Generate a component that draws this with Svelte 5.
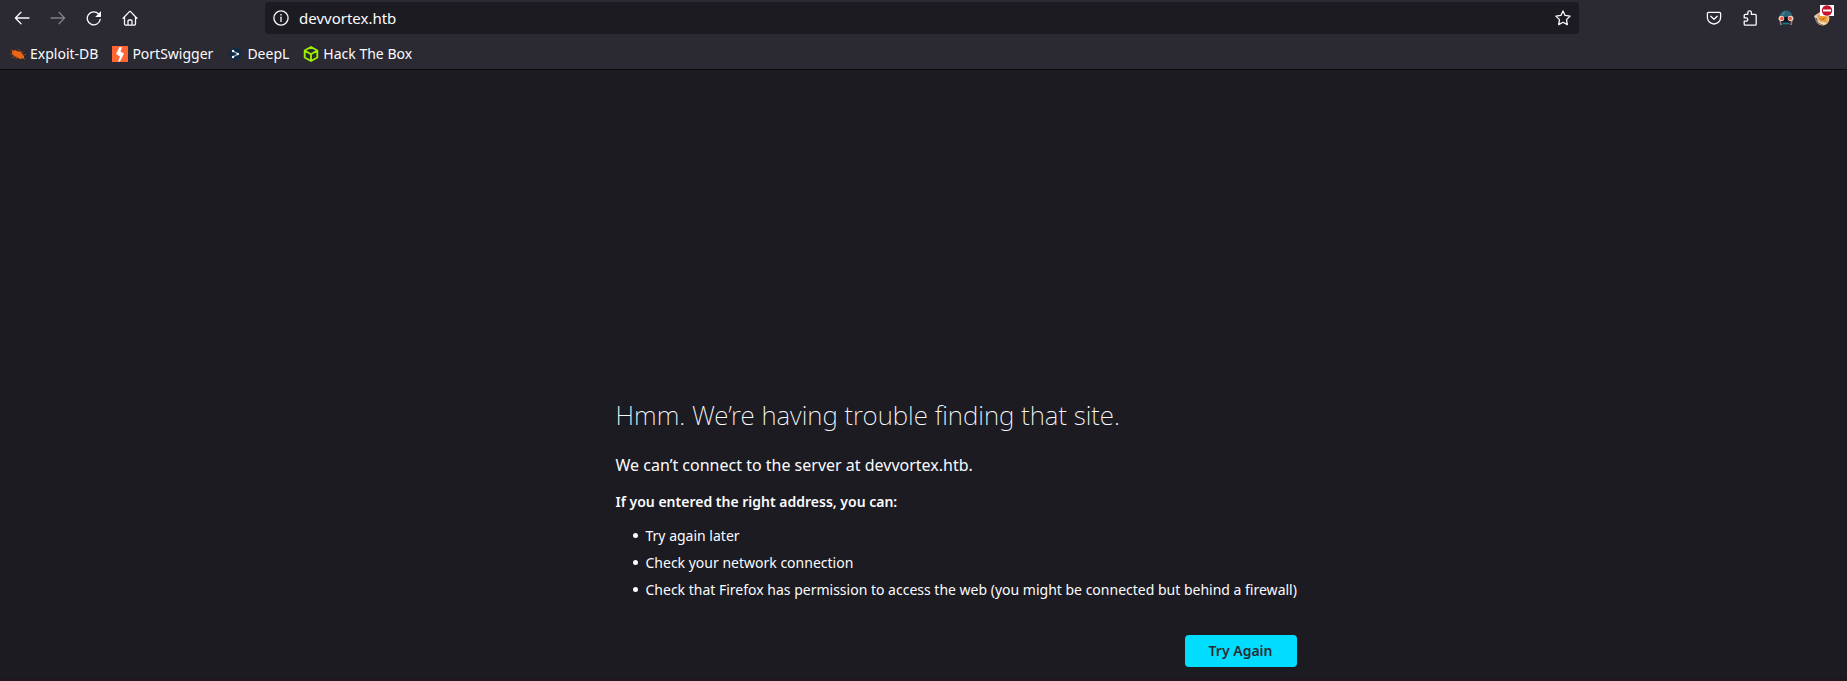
<script>
  const bookmarks = [
    { name: 'Exploit-DB', icon: 'bug' },
    { name: 'PortSwigger', icon: 'bolt' },
    { name: 'DeepL', icon: 'hex' },
    { name: 'Hack The Box', icon: 'cube' }
  ];
  const tips = [
    'Try again later',
    'Check your network connection',
    'Check that Firefox has permission to access the web (you might be connected but behind a firewall)'
  ];
  let address = $state('devvortex.htb');
</script>

<div class="browser">
  <header>
    <nav class="toolbar" aria-label="Navigation">
      <div class="group">
        <button class="tool" aria-label="Back">
          <svg viewBox="0 0 16 16"><path d="M15 8H1.5M7 2.3 1.4 8 7 13.7" /></svg>
        </button>
        <button class="tool" aria-label="Forward" disabled>
          <svg viewBox="0 0 16 16"><path d="M1 8h13.5M9 2.3 14.6 8 9 13.7" /></svg>
        </button>
        <button class="tool" aria-label="Reload">
          <svg viewBox="0 0 16 16"><path d="M14.2 9.4A6.5 6.5 0 1 1 12.6 4" /><path class="solid" d="M15 1v5.4a.6.6 0 0 1-.6.6H9.2z" /></svg>
        </button>
        <button class="tool" aria-label="Home">
          <svg viewBox="0 0 16 16"><path d="M1.1 8.2 7.4 1.6a.9.9 0 0 1 1.2 0l6.3 6.6M2.5 7v6.8a1.4 1.4 0 0 0 1.4 1.4h8.2a1.4 1.4 0 0 0 1.4-1.4V7M6 15v-4a1 1 0 0 1 1-1h2a1 1 0 0 1 1 1v4" /></svg>
        </button>
      </div>
      <div class="urlbar">
        <svg viewBox="0 0 16 16"><circle cx="8" cy="8" r="7.1" /><path d="M8 7.2v4.2" /><path d="M8 4.4v.6" /></svg>
        <input type="text" aria-label="Address" bind:value={address} />
        <button class="star" aria-label="Bookmark this page">
          <svg viewBox="0 0 16 16"><path d="m8 .9 2.1 4.5 5 .7-3.6 3.5.8 5L8 12.3l-4.3 2.3.8-5L.9 6.1l5-.7z" /></svg>
        </button>
      </div>
      <div class="group end">
        <button class="tool" aria-label="Save to Pocket">
          <svg viewBox="0 0 16 16"><path d="M2.6 2.4h10.8a1.2 1.2 0 0 1 1.2 1.2v3.8a6.6 6.6 0 0 1-13.2 0V3.6a1.2 1.2 0 0 1 1.2-1.2zM4.8 6.3 8 9.3l3.2-3" /></svg>
        </button>
        <button class="tool" aria-label="Extensions">
          <svg viewBox="0 0 16 16"><path d="M2.2 5.4a1 1 0 0 1 1-1h2.6V2.6a1.8 1.8 0 0 1 3.6 0v1.8h3.8a1 1 0 0 1 1 1v8.8a1 1 0 0 1-1 1h-10a1 1 0 0 1-1-1v-3h1.9a1.6 1.6 0 0 0 0-3.3H2.2z" /></svg>
        </button>
        <button class="tool" aria-label="Goggles extension">
          <svg class="art" viewBox="0 0 16 16">
            <path fill="#2b6478" d="M1.5 8C1-2 15-2 14.500 8z" />
            <path fill="#438b9c" d="M4 4.5q1-3 3-3l-1 3.5z" />
            <path fill="#11151f" d="M2.500 7h11v8h-11z" />
            <path fill="#8d7b7a" d="M1.5 11h1.500l1 4H2zM13 11h1.500L14 15h-2z" />
            <path fill="#2b7184" d="M4.5 12.5h7V15h-1v-1h-1v1h-1v-1h-1v1h-1v-1h-1v1h-1z" />
            <circle cx="3.4" cy="8.5" r="2.8" fill="#f2d2c6" /><circle cx="12.6" cy="8.5" r="2.8" fill="#f2d2c6" />
            <circle cx="3.8" cy="8.5" r="1.8" fill="#eb5944" /><circle cx="12.2" cy="8.5" r="1.8" fill="#eb5944" />
          </svg>
        </button>
        <button class="tool" aria-label="Proxy extension, disabled">
          <svg class="art" viewBox="0 0 16 16">
            <circle cx="8.5" cy="8.5" r="7" fill="#e9b982" />
            <path fill="#d6cfc7" d="m0 6 3-2 2 8-2 1z" />
            <path fill="#6e6259" d="M1 8h2l1 4 6 2-2 1-5-2z" />
            <path fill="#f29a2e" d="m3 5 10 2-1 5-6-1z" />
            <path fill="#fae3c0" d="m3 10 3 2 6 1-2 2-5-2z" />
            <path fill="#a5662b" d="m5 8 3 1 4-2-3 3-3-1z" />
          </svg>
          <svg class="badge" viewBox="0 0 14 11"><path fill="#fff" d="M0 0h14v11H0z" /><circle cx="7" cy="5.5" r="5.2" fill="#c4122f" /><path fill="#fff" d="M3 4.5h8v2H3z" /></svg>
        </button>
      </div>
    </nav>
    <nav class="bookmarks" aria-label="Bookmarks">
      {#each bookmarks as mark}
        <a href="#{mark.icon}">
          <svg class="art" viewBox="0 0 16 16">
            {#if mark.icon === 'bug'}
              <path fill="#ed6515" d="m2 5 3-1 2 1 4 1 2 3 1 1v2l-4 1-4-2-3-2-1-2z" />
              <path fill="none" stroke="#a54b1c" stroke-width=".8" d="m.5 8 3 1M2 11.5l4-1M6 13l1-2M8 3l2 2 3 1.5M12 12l3 1M1 4l3 1M13 9l2.5-.5" />
            {:else if mark.icon === 'bolt'}
              <path fill="#ff6633" d="M0 0h16v16H0z" />
              <path fill="#fff" d="M7.500 1H10L8.500 5.500l3.500 2L8 15.500H6l2-5-4-2.500z" />
            {:else if mark.icon === 'hex'}
              <path fill="#0f2b46" d="m8 .8 5.8 3.3v7.2L8 15.2l-5.8-3.9V4.1z" />
              <path fill="none" stroke="#a7b5c3" d="m6 5 5 3-5 3" />
              <circle cx="6" cy="5" r="1.2" fill="#fff" /><circle cx="10.8" cy="8" r="1.2" fill="#fff" /><circle cx="6" cy="11" r="1.2" fill="#fff" />
            {:else}
              <path fill="none" stroke="#9fef00" stroke-width="1.9" stroke-linejoin="round" d="m8 1 6.3 3.5v7L8 15l-6.3-3.5v-7zM2 4.7l6 3.5 6-3.5M8 8.2V15" />
            {/if}
          </svg>
          {mark.name}
        </a>
      {/each}
    </nav>
  </header>

  <main>
    <div class="error">
      <h1>Hmm. We’re having trouble finding that site.</h1>
      <p class="short">We can’t connect to the server at devvortex.htb.</p>
      <p class="lead">If you entered the right address, you can:</p>
      <ul>
        {#each tips as tip}
          <li>{tip}</li>
        {/each}
      </ul>
      <div class="actions"><button class="primary">Try Again</button></div>
    </div>
  </main>
</div>

<style>
  :global(body) {
    margin: 0;
    background: #1c1b22;
  }
  .browser {
    min-height: 100vh;
    box-sizing: border-box;
    display: flex;
    flex-direction: column;
    background: #1c1b22;
    border-bottom: 3px solid #1f161e;
    color: #fbfbfe;
    font: 14px/20px "Noto Sans", sans-serif;
  }
  button, input {
    border: 0;
    padding: 0;
    margin: 0;
    background: none;
    color: inherit;
    font: inherit;
  }
  svg {
    display: block;
    flex: none;
    width: 16px;
    height: 16px;
    fill: none;
    stroke: currentColor;
    stroke-width: 1.3;
    stroke-linecap: round;
    stroke-linejoin: round;
  }
  .art, .badge {
    stroke: none;
  }
  .solid {
    fill: currentColor;
    stroke: none;
  }
  header {
    background: #2b2a33;
    border-bottom: 1px solid #0c0c0d;
  }
  .toolbar {
    display: flex;
    align-items: center;
    padding: 2px 7px 3px 4px;
  }
  .group {
    display: flex;
    width: 261px;
  }
  .end {
    justify-content: flex-end;
  }
  .tool {
    position: relative;
    width: 36px;
    height: 32px;
    display: grid;
    place-items: center;
  }
  .tool:disabled {
    opacity: 0.4;
  }
  .badge {
    position: absolute;
    top: 3px;
    right: 6px;
    width: 14px;
    height: 11px;
  }
  .urlbar {
    flex: 1;
    height: 32px;
    display: flex;
    align-items: center;
    padding: 0 8px;
    background: #1c1b22;
    border-radius: 4px;
  }
  .urlbar input {
    flex: 1;
    min-width: 0;
    margin-left: 10px;
    outline: none;
    font-size: 15px;
  }
  .bookmarks {
    display: flex;
    gap: 14px;
    padding: 7px 10px 5px;
  }
  .bookmarks a {
    display: flex;
    align-items: center;
    gap: 4px;
    color: inherit;
    text-decoration: none;
  }
  main {
    flex: 1;
    display: flex;
    flex-direction: column;
    align-items: center;
    justify-content: flex-end;
  }
  .error {
    box-sizing: border-box;
    width: 100%;
    max-width: 780px;
    padding: 24px 12px 11px 82px;
  }
  h1 {
    margin: 0 0 20px;
    font-size: 26px;
    line-height: 36px;
    font-weight: 200;
  }
  .short {
    margin: 0 0 15px;
    font-size: 16px;
    line-height: 24px;
  }
  .lead {
    margin: 0 0 13px;
    font-weight: 600;
  }
  ul {
    margin: 0;
    padding-left: 17px;
    list-style: none;
  }
  li {
    display: flex;
    align-items: center;
    gap: 8px;
    margin-bottom: 6px;
    line-height: 21px;
  }
  li::before {
    content: "";
    flex: none;
    width: 5px;
    height: 5px;
    border-radius: 50%;
    background: currentColor;
  }
  .actions {
    display: flex;
    justify-content: flex-end;
    padding: 29px 5px 0;
  }
  .primary {
    height: 32px;
    padding: 0 24px;
    border-radius: 4px;
    background: #00ddff;
    color: #2b2a33;
    font-weight: 600;
  }
</style>
